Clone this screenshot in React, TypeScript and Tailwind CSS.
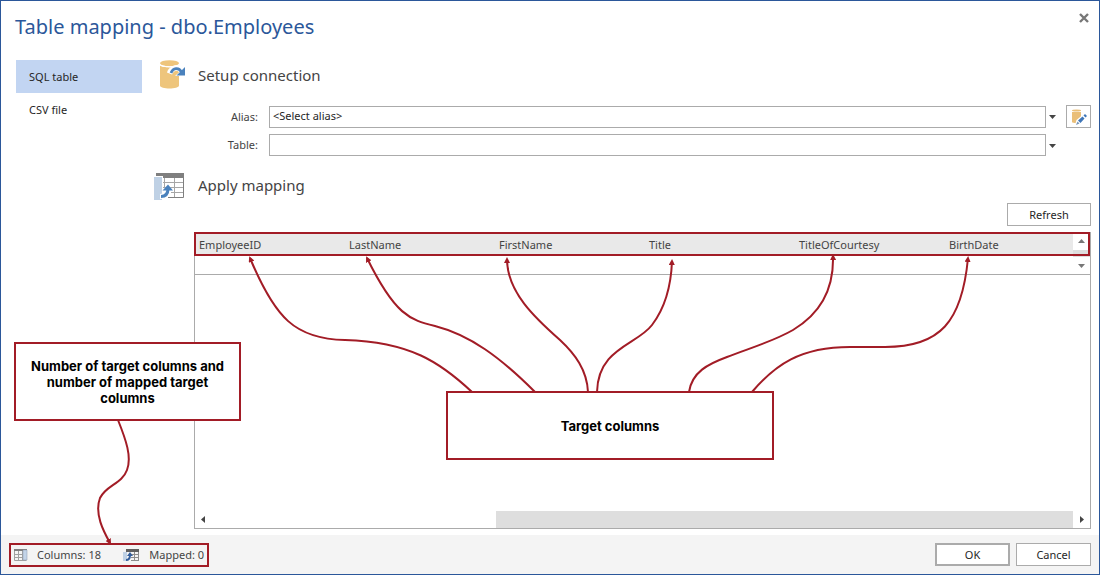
import type { ReactNode } from "react";

const columns = ["EmployeeID", "LastName", "FirstName", "Title", "TitleOfCourtesy", "BirthDate"];

// one connector per column, running from the callout up to its header
const connectors = [
  "M277 159 C245 129 215 109 150 107 C100 106 80 85 55 25",
  "M340 159 C305 124 275 102 240 93 C215 87 200 82 172 25",
  "M393 159 C392 137 380 121 365 107 C340 85 312 59 312 26",
  "M402 159 C403 115 442 112 457 92 C470 75 476 55 477 28",
  "M494 159 C497 139 513 131 532 124 C555 115 577 109 598 97 C625 81 639 57 638 23",
  "M557 159 C580 132 605 114 655 114 L690 114 C745 114 767 89 773 25",
];

const buttonClass = "h-[23px] border border-[#ababab] bg-white text-[11px] leading-4 text-[#262626]";

function DatabaseIcon() {
  return (
    <svg width="28" height="30" viewBox="0 0 28 30" aria-hidden="true">
      <path d="M1 5.500c2 2.500 17 2.500 19 0V25.500c0 4 -19 4 -19 0z" fill="#eec57c" />
      <ellipse cx="10.500" cy="3.200" rx="9.500" ry="3" fill="#eec57c" />
      <path d="M1 4.500c1.500 3 17.500 3 19 0" fill="none" stroke="#fff" />
      <path d="M10.500 13.500C13 7 20 6 23 12" fill="none" stroke="#fff" strokeWidth="5.500" />
      <path d="M16 16l10-9v9z" fill="#fff" />
      <path d="M12 13C14 7.500 20 7 22.500 12" fill="none" stroke="#4a82bd" strokeWidth="2.800" />
      <path d="M26 7v8.500h-8.500z" fill="#4a82bd" />
    </svg>
  );
}

function MappingIcon() {
  return (
    <svg width="30" height="30" viewBox="0 0 30 30" aria-hidden="true">
      <path d="M2 3h28v5H2z" fill="#7f7f7f" />
      <path d="M9 12.500h20M9 17.500h20M17 22.500h12M20.500 8v19M10.500 8v9" fill="none" stroke="#a6a6a6" />
      <path d="M29.500 8v19.500H14" fill="none" stroke="#7f7f7f" />
      <path d="M0 6h9v24H0z" fill="#fff" />
      <path d="M0 7h8v23H0z" fill="#bfd1e5" />
      <path d="M6 26.500c5 0 8-3 8-9" fill="none" stroke="#fff" strokeWidth="5" />
      <path d="M7 26.500c5 0 7-3 7-8" fill="none" stroke="#4a82bd" strokeWidth="3" />
      <path d="M8.500 20.500l5.500-6 5 6z" fill="#4a82bd" />
    </svg>
  );
}

function MappedIcon() {
  return (
    <svg width="16" height="14" viewBox="0 0 16 14" aria-hidden="true">
      <path d="M3 1h13v3H3z" fill="#5f5f5f" />
      <path d="M8 6.500h8M8 9.500h8M8 12.500h8M11.500 4v9M15.500 4v9" fill="none" stroke="#8c8c8c" />
      <path d="M0 4h4v9H0z" fill="#bfd1e5" />
      <path d="M3 12c3 0 4-1.500 4-5" fill="none" stroke="#345f9c" strokeWidth="2" />
      <path d="M4 8l3-4 3 4z" fill="#345f9c" />
    </svg>
  );
}

function ColumnsIcon() {
  return (
    <svg width="14" height="12" viewBox="0 0 14 12" aria-hidden="true">
      <path d="M0 0h13v2H0z" fill="#7f7f7f" />
      <path d="M.5 2v9.500h12M4.500 2v9M8.500 2v9M0 5.500h9M0 8.500h9" fill="none" stroke="#a0a0a0" />
      <path d="M9 1h4v10H9z" fill="#c3d4e8" stroke="#8a9bb0" strokeWidth=".5" />
    </svg>
  );
}

function EditDatabaseIcon() {
  return (
    <svg width="16" height="16" viewBox="0 0 16 16" aria-hidden="true">
      <path d="M1 3v10c0 1.500 9 1.500 9 0V3z" fill="#eabf79" />
      <ellipse cx="5.500" cy="1.500" rx="4.500" ry="1" fill="#eabf79" />
      <path d="M4 16l1.500-5 6-5 3 3-6.500 7z" fill="#fff" />
      <path d="M7 11.500l4.500-4 2 2L9.500 14z" fill="#3f76b8" />
      <path d="M12.500 6.500l1.500-1.500 2 2-1.500 1.500z" fill="#3f76b8" />
      <path d="M6.500 12.500l2 2L5 16z" fill="#7894b4" />
    </svg>
  );
}

function Triangle({ dir }: { readonly dir: "up" | "down" | "left" | "right" }) {
  const shapes = {
    up: "M1 6l3.500-4 3.500 4z",
    down: "M1 3h7L4.500 7z",
    left: "M6 1v7L2 4.500z",
    right: "M3 1v7l4-3.500z",
  };
  return (
    <svg width="9" height="9" viewBox="0 0 9 9" aria-hidden="true" fill="currentColor">
      <path d={shapes[dir]} />
    </svg>
  );
}

function ArrowHead({ id }: { readonly id: string }) {
  return (
    <marker id={id} viewBox="0 0 6 6" refX="4" refY="3" markerWidth="6" markerHeight="6" markerUnits="userSpaceOnUse" orient="auto">
      <path d="M0 0l6 3-6 3z" fill="#a21c26" />
    </marker>
  );
}

function SectionTitle({ icon, children }: { readonly icon: ReactNode; readonly children: ReactNode }) {
  return (
    <div className="flex h-[30px] items-center">
      <div className="flex w-11 shrink-0">{icon}</div>
      <h2 className="text-[15px] leading-5 text-[#444]">{children}</h2>
    </div>
  );
}

function SelectField({ id, label, value }: { readonly id: string; readonly label: string; readonly value: string }) {
  return (
    <>
      <label htmlFor={id} className="w-26 shrink-0 text-right text-[11px] leading-4 text-[#444]">
        {label}
      </label>
      <select
        id={id}
        className="ml-[11px] h-[22px] min-w-0 flex-1 appearance-none rounded-none border border-[#ababab] bg-white px-[3px] text-[11px] text-[#262626]"
      >
        <option>{value}</option>
      </select>
      <span className="flex w-5 pl-0.5 text-[#444]">
        <Triangle dir="down" />
      </span>
    </>
  );
}

export default function App() {
  return (
    <div className="relative flex min-h-screen flex-col border border-[#2b579a] bg-white font-['Noto_Sans','Open_Sans',sans-serif]">
      <header className="flex h-[59px] shrink-0 items-start justify-between pl-3.5">
        <h1 className="mt-3 text-[20px] leading-7 text-[#2b579a]">Table mapping - dbo.Employees</h1>
        <button type="button" aria-label="Close" className="mt-3 mr-2.5 flex text-[#777]">
          <svg width="10" height="10" viewBox="0 0 10 10" aria-hidden="true">
            <path d="M1 1l8 8M9 1L1 9" stroke="currentColor" strokeWidth="2.400" />
          </svg>
        </button>
      </header>

      <div className="flex flex-1">
        <nav className="ml-[15px] w-[126px] shrink-0 text-[11px] leading-4 text-[#262626]">
          <button type="button" className="block h-[33px] w-full bg-[#c2d5f2] pl-[13px] text-left">SQL table</button>
          <button type="button" className="block h-[33px] w-full pl-[13px] text-left">CSV file</button>
        </nav>

        <main className="mr-2 ml-3 flex min-w-0 flex-1 flex-col">
          <SectionTitle icon={<span className="ml-[5px]"><DatabaseIcon /></span>}>Setup connection</SectionTitle>
          <div className="mt-[15px] flex h-[23px] items-center">
            <SelectField id="alias" label="Alias:" value="<Select alias>" />
            <button type="button" aria-label="Edit aliases" className="flex h-[23px] w-[25px] items-center justify-center border border-[#ababab]">
              <EditDatabaseIcon />
            </button>
          </div>
          <div className="mt-1.5 mr-[25px] flex h-[22px] items-center">
            <SelectField id="table" label="Table:" value="" />
          </div>

          <div className="mt-3.5">
            <SectionTitle icon={<MappingIcon />}>Apply mapping</SectionTitle>
          </div>
          <button type="button" className={`mt-[3px] w-[84px] self-end ${buttonClass}`}>Refresh</button>

          <section className="relative mt-1.5 mb-1.5 ml-10 flex flex-1 flex-col border border-[#ababab]">
            <div className="relative flex h-[42px] border-b border-[#ababab]">
              <table className="w-full table-fixed self-start text-left text-[11px] text-[#444]">
                <thead>
                  <tr className="h-[23px] bg-[#e9e9e9]">
                    {columns.map((name) => (
                      <th key={name} className="w-[150px] pl-1 leading-4 font-normal last:w-auto">{name}</th>
                    ))}
                  </tr>
                </thead>
              </table>
              <div className="absolute top-0 right-0 flex h-[41px] w-[17px] flex-col text-[#777]">
                <div className="flex h-[17px] items-center justify-center bg-white"><Triangle dir="up" /></div>
                <div className="h-[7px] bg-[#dedede]" />
                <div className="flex h-[17px] items-center justify-center bg-white"><Triangle dir="down" /></div>
              </div>
              <div className="absolute -top-px right-0 -left-px h-6 border-2 border-[#a21c26]" />
            </div>
            <div className="flex-1" />
            <div className="flex h-[17px] items-stretch text-[#444]">
              <button type="button" aria-label="Scroll left" className="flex w-[17px] items-center justify-center"><Triangle dir="left" /></button>
              <div className="flex flex-1 justify-end"><div className="w-[67%] bg-[#dedede]" /></div>
              <button type="button" aria-label="Scroll right" className="flex w-[17px] items-center justify-center"><Triangle dir="right" /></button>
            </div>

            <svg className="pointer-events-none absolute top-0 left-0" width="895" height="160" viewBox="0 0 895 160" aria-hidden="true">
              <defs><ArrowHead id="column-arrow" /></defs>
              {connectors.map((d) => (
                <path key={d} d={d} fill="none" stroke="#a21c26" strokeWidth="2" markerEnd="url(#column-arrow)" />
              ))}
            </svg>
            <div className="absolute top-[158px] left-[251px] flex h-[69px] w-[328px] items-center justify-center border-2 border-[#a21c26] bg-white font-['Inter','Lato',sans-serif] text-[13px] leading-4 font-bold text-black">
              Target columns
            </div>
          </section>
        </main>
      </div>

      <footer className="flex h-[39px] shrink-0 items-center bg-[#f4f4f4] px-2 text-[11px] text-[#444]">
        <div className="flex h-6 w-[200px] items-center border-2 border-[#a21c26] pl-[3px]">
          <ColumnsIcon />
          <span className="ml-[9px] leading-4">Columns: 18</span>
          <span className="ml-auto"><MappedIcon /></span>
          <span className="mr-[3px] ml-2.5 leading-4">Mapped: 0</span>
        </div>
        <div className="ml-auto flex gap-1.5">
          <button type="button" className="h-[23px] w-[75px] border-2 border-[#ababab] bg-white leading-4 text-[#262626]">OK</button>
          <button type="button" className={`w-[75px] ${buttonClass}`}>Cancel</button>
        </div>
      </footer>

      <div className="absolute bottom-[153px] left-[13px] h-[79px] w-[227px]">
        <svg className="pointer-events-none absolute top-0 left-0" width="227" height="206" viewBox="0 0 227 206" aria-hidden="true">
          <defs><ArrowHead id="status-arrow" /></defs>
          <path d="M104 78 C112 98 118 115 113 128 C108 142 92 143 86 156 C80 172 90 190 96 201" fill="none" stroke="#a21c26" strokeWidth="2" markerEnd="url(#status-arrow)" />
        </svg>
        <div className="relative flex h-full items-center justify-center border-2 border-[#a21c26] bg-white px-2 text-center font-['Inter','Lato',sans-serif] text-[13px] leading-4 font-bold text-black">
          Number of target columns and number of mapped target columns
        </div>
      </div>
    </div>
  );
}
